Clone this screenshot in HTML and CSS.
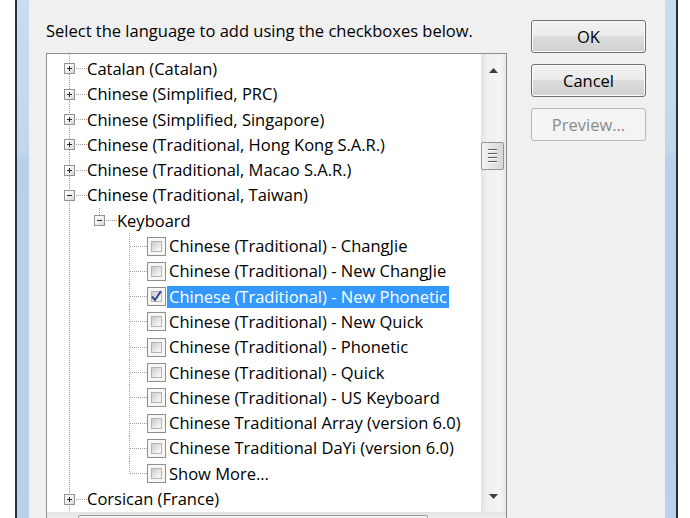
FILE: index.html
```html
<!DOCTYPE html>
<html lang="en">
<head>
    <meta charset="UTF-8">
    <title>Add Input Language</title>
    <link rel="stylesheet" href="styles.css">
</head>
<body>
    <div class="window">
        <div class="frame frame-left"></div>

        <div class="client">
            <div class="main">
                <p class="prompt">Select the language to add using the checkboxes below.</p>

                <div class="listbox">
                    <ul class="tree">
                        <li class="row"><span class="node"><span class="expander"><svg width="9" height="9"><path d="M2 4.5h5M4.5 2v5"/></svg></span></span><span class="label">Catalan (Catalan)</span></li>
                        <li class="row"><span class="node"><span class="expander"><svg width="9" height="9"><path d="M2 4.5h5M4.5 2v5"/></svg></span></span><span class="label">Chinese (Simplified, PRC)</span></li>
                        <li class="row"><span class="node"><span class="expander"><svg width="9" height="9"><path d="M2 4.5h5M4.5 2v5"/></svg></span></span><span class="label">Chinese (Simplified, Singapore)</span></li>
                        <li class="row"><span class="node"><span class="expander"><svg width="9" height="9"><path d="M2 4.5h5M4.5 2v5"/></svg></span></span><span class="label">Chinese (Traditional, Hong Kong S.A.R.)</span></li>
                        <li class="row"><span class="node"><span class="expander"><svg width="9" height="9"><path d="M2 4.5h5M4.5 2v5"/></svg></span></span><span class="label">Chinese (Traditional, Macao S.A.R.)</span></li>
                        <li class="row"><span class="node"><span class="expander"><svg width="9" height="9"><path d="M2 4.5h5"/></svg></span></span><span class="label">Chinese (Traditional, Taiwan)</span></li>

                        <li class="row"><span class="indent"></span><span class="node first"><span class="expander"><svg width="9" height="9"><path d="M2 4.5h5"/></svg></span></span><span class="label">Keyboard</span></li>

                        <li class="row"><span class="indent"></span><span class="indent"></span><span class="leaf"></span><span class="check"><span class="check-inner"></span></span><span class="label">Chinese (Traditional) - ChangJie</span></li>
                        <li class="row"><span class="indent"></span><span class="indent"></span><span class="leaf"></span><span class="check"><span class="check-inner"></span></span><span class="label">Chinese (Traditional) - New ChangJie</span></li>
                        <li class="row"><span class="indent"></span><span class="indent"></span><span class="leaf"></span><span class="check checked"><span class="check-inner"></span><svg class="tick" width="19" height="19"><path d="M5 9.5l3 3.5 6-9"/></svg></span><span class="label selected">Chinese (Traditional) - New Phonetic</span></li>
                        <li class="row"><span class="indent"></span><span class="indent"></span><span class="leaf"></span><span class="check"><span class="check-inner"></span></span><span class="label">Chinese (Traditional) - New Quick</span></li>
                        <li class="row"><span class="indent"></span><span class="indent"></span><span class="leaf"></span><span class="check"><span class="check-inner"></span></span><span class="label">Chinese (Traditional) - Phonetic</span></li>
                        <li class="row"><span class="indent"></span><span class="indent"></span><span class="leaf"></span><span class="check"><span class="check-inner"></span></span><span class="label">Chinese (Traditional) - Quick</span></li>
                        <li class="row"><span class="indent"></span><span class="indent"></span><span class="leaf"></span><span class="check"><span class="check-inner"></span></span><span class="label">Chinese (Traditional) - US Keyboard</span></li>
                        <li class="row"><span class="indent"></span><span class="indent"></span><span class="leaf"></span><span class="check"><span class="check-inner"></span></span><span class="label">Chinese Traditional Array (version 6.0)</span></li>
                        <li class="row"><span class="indent"></span><span class="indent"></span><span class="leaf"></span><span class="check"><span class="check-inner"></span></span><span class="label">Chinese Traditional DaYi (version 6.0)</span></li>
                        <li class="row"><span class="indent"></span><span class="indent"></span><span class="leaf last"></span><span class="check"><span class="check-inner"></span></span><span class="label">Show More...</span></li>

                        <li class="row"><span class="node"><span class="expander"><svg width="9" height="9"><path d="M2 4.5h5M4.5 2v5"/></svg></span></span><span class="label">Corsican (France)</span></li>
                    </ul>

                    <div class="vscroll">
                        <div class="arrow"><svg width="9" height="5"><path d="M0 5L4.5 0 9 5z"/></svg></div>
                        <div class="track">
                            <div class="thumb">
                                <span class="grip"></span>
                                <span class="grip"></span>
                                <span class="grip"></span>
                                <span class="grip"></span>
                            </div>
                        </div>
                        <div class="arrow"><svg width="9" height="5"><path d="M0 0L4.5 5 9 0z"/></svg></div>
                    </div>

                    <div class="hscroll">
                        <div class="hthumb"></div>
                    </div>
                </div>
            </div>

            <div class="buttons">
                <button class="btn">OK</button>
                <button class="btn">Cancel</button>
                <button class="btn" disabled>Preview...</button>
            </div>
        </div>

        <div class="frame frame-right"></div>
    </div>
</body>
</html>
```

FILE: styles.css
```css
:root {
    --dialog-bg: #f0f0f0;
    --tree-line: #a0a0a0;
    --highlight: #3399ff;
}

body {
    margin: 0;
    height: 518px;
    overflow: hidden;
    background: #ffffff;
    font-family: "Open Sans", "Noto Sans", sans-serif;
    font-size: 16.5px;
    color: #000000;
}

.window {
    display: flex;
    height: 518px;
    margin-left: 15px;
    width: 663px;
}

/* Aero frame */
.frame {
    flex: none;
    background: linear-gradient(#c9dcf0 0, #c2d7ee 150px, #b8d0ea 160px, #b9d1ea 100%);
}

.frame-left {
    width: 12px;
    border-left: 2px solid #27323f;
}

.frame-right {
    width: 11px;
    border-right: 2px solid #27323f;
}

.client {
    flex: 1;
    display: flex;
    gap: 24px;
    padding: 20px 19px 0 17px;
    background: var(--dialog-bg);
}

.main {
    width: 461px;
}

.prompt {
    margin: 0 0 11px;
    line-height: 22px;
}

/* List box */
.listbox {
    display: grid;
    grid-template-columns: 1fr 25px;
    grid-template-rows: auto 25px;
    border: 1px solid #8a8d92;
    background: #ffffff;
}

.tree {
    list-style: none;
    margin: 0;
    padding: 2.35px 0 0 7px;
    background: repeating-linear-gradient(var(--tree-line) 0 1px, transparent 1px 2px) 22px 0 / 1px 100% no-repeat;
}

.row {
    display: flex;
    align-items: center;
    height: 25.3px;
    white-space: nowrap;
}

.indent {
    flex: none;
    width: 30px;
    height: 100%;
}

.node,
.leaf {
    flex: none;
    display: flex;
    align-items: center;
    width: 33px;
    height: 100%;
    background: repeating-linear-gradient(to right, var(--tree-line) 0 1px, transparent 1px 2px) 16px 50% / 17px 1px no-repeat;
}

.node.first {
    background:
        repeating-linear-gradient(to right, var(--tree-line) 0 1px, transparent 1px 2px) 16px 50% / 17px 1px no-repeat,
        repeating-linear-gradient(var(--tree-line) 0 1px, transparent 1px 2px) 15px 0 / 1px 50% no-repeat;
}

.leaf {
    background:
        repeating-linear-gradient(to right, var(--tree-line) 0 1px, transparent 1px 2px) 16px 50% / 17px 1px no-repeat,
        repeating-linear-gradient(var(--tree-line) 0 1px, transparent 1px 2px) 15px 0 / 1px 100% no-repeat;
}

.leaf.last {
    background:
        repeating-linear-gradient(to right, var(--tree-line) 0 1px, transparent 1px 2px) 16px 50% / 17px 1px no-repeat,
        repeating-linear-gradient(var(--tree-line) 0 1px, transparent 1px 2px) 15px 0 / 1px 50% no-repeat;
}

.expander {
    display: flex;
    align-items: center;
    justify-content: center;
    box-sizing: border-box;
    width: 11px;
    height: 11px;
    margin-left: 10px;
    border: 1px solid #939393;
    background: linear-gradient(135deg, #ffffff 20%, #d6d6d6);
}

.expander path {
    stroke: #222a36;
    stroke-width: 1;
    fill: none;
}

.label {
    display: inline-block;
    line-height: 22px;
    padding: 0 2px;
}

.node + .label {
    padding-left: 0;
}

.label.selected {
    background: var(--highlight);
    color: #ffffff;
}

/* Checkboxes */
.check {
    flex: none;
    display: flex;
    box-sizing: border-box;
    width: 19px;
    height: 19px;
    margin-right: 1px;
    padding: 3px;
    border: 1px solid #8e8f8f;
    background: #f7f7f7;
    position: relative;
}

.check-inner {
    flex: 1;
    border: 1px solid #b4b4b4;
    background: linear-gradient(135deg, #cbcbcb, #f6f6f6 85%);
}

.tick {
    position: absolute;
    left: -1px;
    top: -1px;
}

.tick path {
    fill: none;
    stroke: #3c4f95;
    stroke-width: 2.2;
}

/* Scroll bars */
.vscroll {
    display: flex;
    flex-direction: column;
    background: linear-gradient(to right, #e2e2e2, #f0f0f0 25%, #f4f4f4 75%, #e9e9e9);
}

.arrow {
    display: flex;
    align-items: center;
    justify-content: center;
    height: 32px;
}

.arrow:last-child {
    height: 31px;
}

.arrow path {
    fill: #3e3e3e;
}

.track {
    flex: 1;
}

.thumb {
    display: flex;
    flex-direction: column;
    align-items: center;
    justify-content: center;
    gap: 2px;
    box-sizing: border-box;
    width: 23px;
    height: 28px;
    margin-top: 56px;
    border: 1px solid #979797;
    border-radius: 2px;
    background: linear-gradient(to right, #f4f4f4, #e4e4e4 50%, #d6d6d6);
}

.grip {
    width: 9px;
    height: 1px;
    border-bottom: 1px solid #ffffff;
    background: #5a5a5a;
}

.hscroll {
    grid-column: 1 / span 2;
    padding: 3px 0 0 31px;
    background: linear-gradient(#e2e2e2, #f0f0f0 25%, #f4f4f4 75%, #e9e9e9);
}

.hthumb {
    width: 350px;
    height: 22px;
    box-sizing: border-box;
    border: 1px solid #979797;
    border-radius: 2px;
    background: linear-gradient(#f4f4f4, #e4e4e4 50%, #d6d6d6);
}

/* Buttons */
.buttons {
    flex: none;
    display: flex;
    flex-direction: column;
    gap: 11px;
    width: 115px;
}

.btn {
    height: 33px;
    padding: 0;
    font: inherit;
    color: #000000;
    border: 1px solid #707070;
    border-radius: 3px;
    box-shadow: inset 0 0 0 1px #fcfcfc;
    background: linear-gradient(#f2f2f2 0%, #ebebeb 50%, #dddddd 50%, #cfcfcf 100%);
}

.btn:disabled {
    color: #8b8b8b;
    border-color: #b5b8ba;
    background: #f4f4f4;
    box-shadow: none;
}
```
